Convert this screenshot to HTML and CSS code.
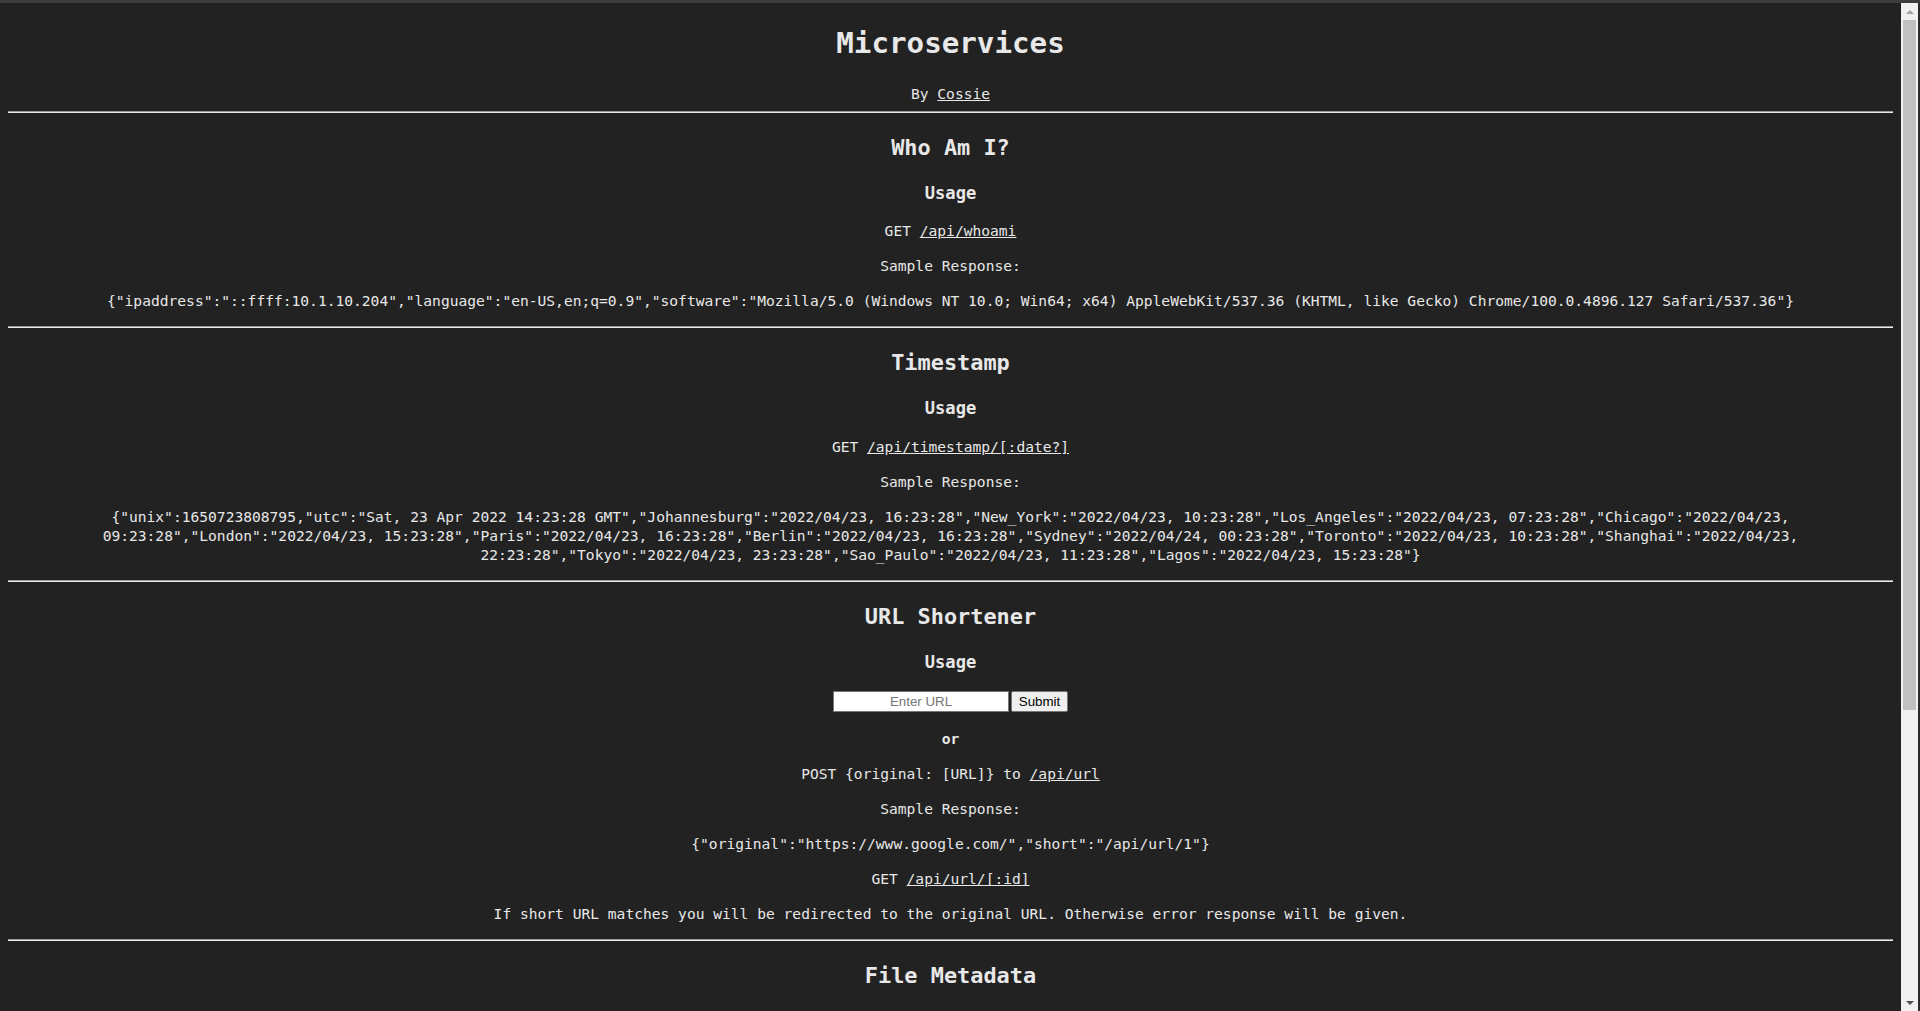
FILE: index.html
```html
<!DOCTYPE html>
<html lang="en">
<head>
<meta charset="utf-8">
<title>Microservices</title>
<link rel="stylesheet" href="styles.css">
</head>
<body>
<div class="chrome-top"></div>
<div class="window">
  <main class="page">
    <header class="intro">
      <h1>Microservices</h1>
      <div class="byline">By <a href="#">Cossie</a></div>
    </header>
    <hr>
    <section>
      <h2>Who Am I?</h2>
      <h3>Usage</h3>
      <p>GET <a href="#">/api/whoami</a></p>
      <p>Sample Response:</p>
      <p>{"ipaddress":"::ffff:10.1.10.204","language":"en-US,en;q=0.9","software":"Mozilla/5.0 (Windows NT 10.0; Win64; x64) AppleWebKit/537.36 (KHTML, like Gecko) Chrome/100.0.4896.127 Safari/537.36"}</p>
    </section>
    <hr>
    <section>
      <h2>Timestamp</h2>
      <h3>Usage</h3>
      <p>GET <a href="#">/api/timestamp/[:date?]</a></p>
      <p>Sample Response:</p>
      <p>{"unix":1650723808795,"utc":"Sat, 23 Apr 2022 14:23:28 GMT","Johannesburg":"2022/04/23, 16:23:28","New_York":"2022/04/23, 10:23:28","Los_Angeles":"2022/04/23, 07:23:28","Chicago":"2022/04/23, 09:23:28","London":"2022/04/23, 15:23:28","Paris":"2022/04/23, 16:23:28","Berlin":"2022/04/23, 16:23:28","Sydney":"2022/04/24, 00:23:28","Toronto":"2022/04/23, 10:23:28","Shanghai":"2022/04/23, 22:23:28","Tokyo":"2022/04/23, 23:23:28","Sao_Paulo":"2022/04/23, 11:23:28","Lagos":"2022/04/23, 15:23:28"}</p>
    </section>
    <hr>
    <section>
      <h2>URL Shortener</h2>
      <h3>Usage</h3>
      <form class="shorten">
        <input class="url-input" type="text" placeholder="Enter URL"><button class="submit" type="button">Submit</button>
      </form>
      <p class="or">or</p>
      <p>POST {original: [URL]} to <a href="#">/api/url</a></p>
      <p>Sample Response:</p>
      <p>{"original":"https://www.google.com/","short":"/api/url/1"}</p>
      <p>GET <a href="#">/api/url/[:id]</a></p>
      <p>If short URL matches you will be redirected to the original URL. Otherwise error response will be given.</p>
    </section>
    <hr>
    <section>
      <h2>File Metadata</h2>
    </section>
  </main>
  <div class="scrollbar">
    <div class="arrow up"></div>
    <div class="track"><div class="thumb"></div></div>
    <div class="arrow down"></div>
  </div>
  <div class="chrome-edge"></div>
</div>
</body>
</html>
```

FILE: styles.css
```css
html, body {
  margin: 0;
  padding: 0;
  height: 100%;
  overflow: hidden;
  background: #222222;
}

body {
  font-family: "DejaVu Sans Mono", "Liberation Mono", monospace;
  color: #e8e8e8;
  display: flex;
  flex-direction: column;
}

.chrome-top {
  height: 3px;
  flex: none;
  background: #3d3d3d;
}

.window {
  flex: 1;
  display: flex;
  min-height: 0;
}

.page {
  flex: 1;
  min-width: 0;
  overflow: hidden;
  padding: 0 8px;
  text-align: center;
}

h1 {
  font-size: 29.2px;
  line-height: 38px;
  margin: 21.44px 0;
  font-weight: bold;
}

h2 {
  font-size: 21.9px;
  line-height: 28px;
  padding-top: 1px;
  margin: 19.92px 0 18.92px;
  font-weight: bold;
}

h3 {
  font-size: 17.1px;
  line-height: 22px;
  padding-top: 1px;
  margin: 18.72px 0 17.72px;
  font-weight: bold;
}

p, .byline {
  font-size: 14.6px;
  line-height: 19px;
}

p {
  margin: 16px 0;
}

.byline {
  margin: 0;
}

.or {
  font-weight: bold;
}

a {
  color: #e8e8e8;
  text-decoration: underline;
}

hr {
  margin: 8px 0;
  height: 0;
  border: none;
  border-top: 1px solid #9c9c9c;
  border-bottom: 1px solid #ececec;
}

.shorten {
  margin: 0;
  height: 23px;
  display: flex;
  align-items: center;
  justify-content: center;
  gap: 2px;
}

.url-input {
  box-sizing: border-box;
  width: 176px;
  height: 21px;
  margin: 0;
  padding: 1px 2px;
  border: 1px solid #767676;
  background: #ffffff;
  font-family: "Liberation Sans", Arial, sans-serif;
  font-size: 13.33px;
  text-align: center;
  color: #000;
}

.url-input::placeholder {
  color: #757575;
}

.submit {
  box-sizing: border-box;
  width: 57px;
  height: 21px;
  margin: 0;
  padding: 1px 6px;
  border: 1px solid #767676;
  border-radius: 2px;
  background: #efefef;
  color: #000;
  font-family: "Liberation Sans", Arial, sans-serif;
  font-size: 13.33px;
}

.scrollbar {
  flex: none;
  width: 17px;
  background: #f1f1f1;
  display: flex;
  flex-direction: column;
}

.arrow {
  flex: none;
  height: 17px;
  display: flex;
  align-items: center;
  justify-content: center;
}

.arrow::before {
  content: "";
  width: 0;
  height: 0;
  border-left: 4px solid transparent;
  border-right: 4px solid transparent;
}

.arrow.up::before {
  border-bottom: 4px solid #a3a3a3;
}

.arrow.down::before {
  border-top: 4px solid #505050;
}

.track {
  flex: 1;
  padding: 0 2px;
}

.thumb {
  height: 690px;
  background: #c1c1c1;
}

.chrome-edge {
  flex: none;
  width: 2px;
  background: #2b2b2b;
}
```
